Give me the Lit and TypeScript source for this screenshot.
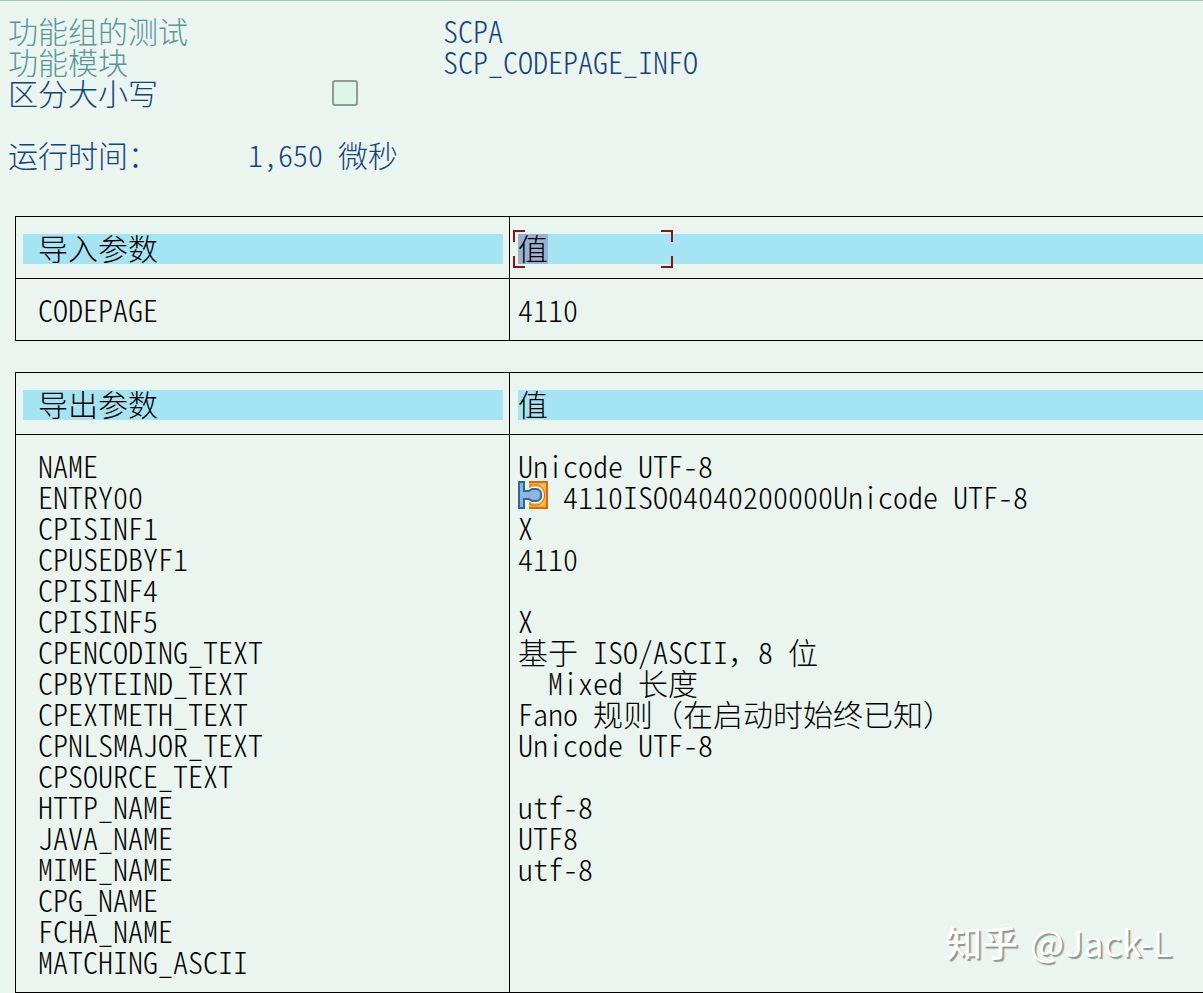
import { LitElement, html, css, svg, nothing } from "lit";
import { customElement, property } from "lit/decorators.js";

interface Param {
  name: string;
  value?: string;
  structure?: boolean;
}

const IMPORTS: Param[] = [{ name: "CODEPAGE", value: "4110" }];

const EXPORTS: Param[] = [
  { name: "NAME", value: "Unicode UTF-8" },
  { name: "ENTRY00", value: "4110ISO04040200000Unicode UTF-8", structure: true },
  { name: "CPISINF1", value: "X" },
  { name: "CPUSEDBYF1", value: "4110" },
  { name: "CPISINF4" },
  { name: "CPISINF5", value: "X" },
  { name: "CPENCODING_TEXT", value: "基于 ISO/ASCII，8 位" },
  { name: "CPBYTEIND_TEXT", value: "  Mixed 长度" },
  { name: "CPEXTMETH_TEXT", value: "Fano 规则（在启动时始终已知）" },
  { name: "CPNLSMAJOR_TEXT", value: "Unicode UTF-8" },
  { name: "CPSOURCE_TEXT" },
  { name: "HTTP_NAME", value: "utf-8" },
  { name: "JAVA_NAME", value: "UTF8" },
  { name: "MIME_NAME", value: "utf-8" },
  { name: "CPG_NAME" },
  { name: "FCHA_NAME" },
  { name: "MATCHING_ASCII" },
];

// Structure icon: a blue plug seated in an orange socket.
const structureIcon = svg`
  <path d="M11 1H29V27H11V21H25V6H11Z" fill="#f8b62c"/>
  <path d="M14 4H26V24H14Z" fill="#fbc650"/>
  <path d="M11 1H29V27H11" fill="none" stroke="#d9671c" stroke-width="2"/>
  <path d="M12 7V4H19C29 5 29 23 19 24H12V21" fill="none" stroke="#d9671c" stroke-width="1"/>
  <path d="M1 1H8V8H12L14 6H19C28 7 28 21 19 22H14L12 20H8V27H1Z" fill="#f4f8ee"/>
  <path d="M1 1H6V10H11L14 8H18C25 8 25 20 18 20H14L11 18H6V27H1Z" fill="#8fb4e0" stroke="#2a6a9f" stroke-width="2"/>
`;

// Latin is set half-width; full-width punctuation keeps its whole cell.
const cells = (text: string) =>
  text.split(/([，（）])/).map((part) => (/^[，（）]$/.test(part) ? html`<span class="full">${part}</span>` : part));

@customElement("param-table")
export class ParamTable extends LitElement {
  @property() heading = "";
  @property({ attribute: false }) rows: Param[] = [];
  @property({ type: Boolean }) focused = false;

  static styles = css`
    :host {
      display: block;
      margin-left: 15px;
    }
    .grid {
      width: 100%;
      table-layout: fixed;
      border-spacing: 0;
      border: 1px solid #000;
      border-right: none;
    }
    .name-col {
      width: 494px;
    }
    th,
    td {
      text-align: left;
      font-weight: inherit;
      white-space: pre;
    }
    th {
      padding: 17px 0 14px;
      border-bottom: 1px solid #000;
    }
    td {
      height: 31px;
      line-height: 31px;
      padding: 0;
    }
    .name {
      border-right: 1px solid #000;
    }
    th.name {
      padding-left: 7px;
      padding-right: 6px;
    }
    th.value,
    td.value {
      padding-left: 8px;
    }
    td.name {
      padding-left: 22px;
    }
    tbody tr:first-child td {
      padding-top: 15px;
    }
    tbody tr:last-child td {
      padding-bottom: 15px;
    }
    .full {
      font-feature-settings: normal;
    }
    .band {
      display: block;
      position: relative;
      height: 30px;
      line-height: 26px;
      background: #a5e5f3;
    }
    .name .band {
      padding-left: 15px;
    }
    .selected {
      display: inline-block;
      height: 30px;
      background: #9ab2d2;
    }
    .frame {
      position: absolute;
      left: -5px;
      top: -4px;
      width: 160px;
      height: 38px;
      fill: none;
      stroke: #8c1414;
      stroke-width: 2;
    }
    .with-icon {
      display: flex;
      gap: 15px;
    }
    .icon {
      width: 30px;
      height: 28px;
      flex: none;
    }
  `;

  render() {
    return html`
      <table class="grid">
        <colgroup>
          <col class="name-col" />
          <col />
        </colgroup>
        <thead>
          <tr>
            <th class="name" scope="col"><span class="band">${this.heading}</span></th>
            <th class="value" scope="col"><span class="band">${this.focused
              ? html`<span class="selected">值</span><svg class="frame" viewBox="0 0 160 38" aria-hidden="true"><path d="M1 12V1H12M148 1H159V12M159 26V37H148M12 37H1V26" /></svg>`
              : "值"}</span></th>
          </tr>
        </thead>
        <tbody>
          ${this.rows.map(
            (r) => html`<tr>
              <td class="name">${r.name}</td>
              <td class="value">${r.structure
                ? html`<div class="with-icon"><svg class="icon" viewBox="0 0 30 28" aria-hidden="true">${structureIcon}</svg><span>${r.value}</span></div>`
                : r.value ? cells(r.value) : nothing}</td>
            </tr>`
          )}
        </tbody>
      </table>
    `;
  }
}

@customElement("app-root")
export class AppRoot extends LitElement {
  static styles = css`
    :host {
      display: block;
      position: relative;
      box-sizing: border-box;
      min-height: 100vh;
      overflow: hidden;
      border-top: 1px solid #a9c2b6;
      background: #eaf5ef;
      color: #000;
      font-family: "Noto Sans CJK SC", "Liberation Mono", monospace;
      font-size: 30px;
      font-weight: 300;
      font-feature-settings: "hwid";
      line-height: 31px;
    }
    .summary {
      padding: 14px 0 0 8px;
      color: #14427f;
    }
    .line {
      display: flex;
      height: 31px;
      white-space: nowrap;
    }
    .key {
      width: 435px;
      color: #5a9699;
    }
    .case-label {
      width: 324px;
    }
    .runtime {
      margin: 31px 0 46px;
    }
    .runtime-key {
      width: 240px;
    }
    .check {
      appearance: none;
      box-sizing: border-box;
      width: 26px;
      height: 26px;
      margin: 3px 0 0;
      border: 2px solid #8f9b95;
      border-radius: 3px;
      background: #dff5ea;
    }
    .exports {
      margin-top: 31px;
    }
    .watermark {
      position: absolute;
      right: 31px;
      bottom: 26px;
      display: flex;
      gap: 12px;
      font-size: 36px;
      line-height: 52px;
      font-weight: 400;
      font-feature-settings: normal;
      color: #fff;
      text-shadow: 2px 2px 1px #8e9893;
      white-space: nowrap;
    }
    .site {
      font-weight: 500;
    }
  `;

  render() {
    return html`
      <header class="summary">
        <div class="line"><span class="key">功能组的测试</span><span>SCPA</span></div>
        <div class="line"><span class="key">功能模块</span><span>SCP_CODEPAGE_INFO</span></div>
        <div class="line"><label class="case-label" for="case">区分大小写</label><input class="check" id="case" type="checkbox" /></div>
        <div class="line runtime"><span class="runtime-key">运行时间：</span><span>1,650 微秒</span></div>
      </header>
      <param-table heading="导入参数" .rows=${IMPORTS} focused></param-table>
      <param-table class="exports" heading="导出参数" .rows=${EXPORTS}></param-table>
      <div class="watermark"><span class="site">知乎</span><span>@Jack-L</span></div>
    `;
  }
}
